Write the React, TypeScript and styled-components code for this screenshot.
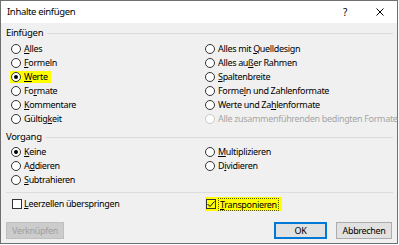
import React from "react";
import styled, { createGlobalStyle } from "styled-components";

const Global = createGlobalStyle`
  html, body { margin: 0; padding: 0; background: #ffffff; }
  body { font-family: "Noto Sans", "Open Sans", sans-serif; font-size: 9px; letter-spacing: -0.33px; color: #000; }
  * { box-sizing: border-box; }
`;

const Window = styled.div`
  width: 398px;
  height: 244px;
  border: 1px solid #6f6f6f;
  background: #f0f0f0;
  display: flex;
  flex-direction: column;
`;

const TitleBar = styled.div`
  height: 22px;
  background: #ffffff;
  display: flex;
  align-items: center;
  padding-left: 6px;
  flex: none;
`;

const Title = styled.div`
  flex: 1;
  font-size: 9.5px;
  letter-spacing: -0.35px;
  line-height: 14px;
`;

const TitleButton = styled.div<{ $w: number }>`
  width: ${(p) => p.$w}px;
  height: 22px;
  display: flex;
  align-items: center;
  justify-content: center;
  font-size: 10px;
  color: #000;
`;

const Body = styled.div`
  flex: 1;
  display: flex;
  flex-direction: column;
  padding: 3px 4px 4px 4px;
`;

const GroupHeader = styled.div<{ $mt?: number }>`
  display: flex;
  align-items: center;
  height: 14px;
  line-height: 14px;
  margin-top: ${(p) => p.$mt ?? 0}px;
  gap: 4px;
  padding-left: 1px;
  font-size: 9.5px;
`;

const HeaderLine = styled.div`
  flex: 1;
  height: 1px;
  background: #dcdcdc;
`;

const OptionGrid = styled.div<{ $mt: number; $rows: number }>`
  display: grid;
  grid-template-columns: 194px 1fr;
  grid-auto-flow: column;
  grid-template-rows: repeat(${(p) => p.$rows}, 14px);
  margin-top: ${(p) => p.$mt}px;
  padding-left: 6px;
`;

const Option = styled.label<{ $disabled?: boolean }>`
  display: flex;
  align-items: center;
  height: 14px;
  line-height: 12px;
  white-space: nowrap;
  color: ${(p) => (p.$disabled ? "#a6a6a6" : "#000")};
`;

const Highlight = styled.span<{ $h: number }>`
  display: inline-flex;
  align-items: center;
  height: ${(p) => p.$h}px;
  background: #ffff00;
  padding: 0 3px 0 1px;
  margin-left: -1px;
`;

const RadioCircle = styled.span<{ $checked?: boolean; $disabled?: boolean }>`
  width: 10px;
  height: 10px;
  border-radius: 50%;
  border: 1px solid ${(p) => (p.$disabled ? "#c8c8c8" : "#333333")};
  background: #ffffff;
  display: inline-flex;
  align-items: center;
  justify-content: center;
  margin-right: 3px;
  flex: none;
  &::after {
    content: "";
    display: ${(p) => (p.$checked ? "block" : "none")};
    width: 4px;
    height: 4px;
    border-radius: 50%;
    background: #000;
  }
`;

const Box = styled.span<{ $clear?: boolean }>`
  width: 10px;
  height: 10px;
  border: 1px solid #333333;
  background: ${(p) => (p.$clear ? "transparent" : "#ffffff")};
  display: inline-flex;
  align-items: center;
  justify-content: center;
  margin-right: 2px;
  flex: none;
`;

const FocusText = styled.span`
  border: 1px dotted #5a5a00;
  padding: 0 1px;
  line-height: 11px;
`;

const Separator = styled.div`
  height: 1px;
  background: #dcdcdc;
  margin-top: 5px;
  margin-left: 1px;
`;

const CheckRow = styled.div`
  display: grid;
  grid-template-columns: 194px 1fr;
  margin-top: 4px;
  padding-left: 7px;
  height: 14px;
`;

const ButtonRow = styled.div`
  display: flex;
  margin-top: 11px;
  padding-left: 1px;
  padding-right: 1px;
  align-items: center;
`;

const Spacer = styled.div`
  flex: 1;
`;

const Button = styled.button<{ $variant: "default" | "disabled" | "normal"; $w: number }>`
  width: ${(p) => p.$w}px;
  height: 17px;
  font-family: inherit;
  font-size: 9px;
  letter-spacing: -0.33px;
  line-height: 12px;
  padding: 0;
  margin-left: ${(p) => (p.$variant === "normal" ? "9px" : "0")};
  background: ${(p) => (p.$variant === "disabled" ? "#cccccc" : "#e1e1e1")};
  color: ${(p) => (p.$variant === "disabled" ? "#9f9f9f" : "#000")};
  border: ${(p) =>
    p.$variant === "default"
      ? "2px solid #0078d7"
      : p.$variant === "disabled"
      ? "1px solid #bfbfbf"
      : "1px solid #adadad"};
`;

const U = styled.u`
  text-decoration-thickness: 1px;
  text-underline-offset: 1px;
`;

type Opt = { pre?: string; u?: string; post?: string; checked?: boolean; disabled?: boolean; hl?: boolean };

const Radio: React.FC<{ o: Opt }> = ({ o }) => {
  const content = (
    <>
      <RadioCircle $checked={o.checked} $disabled={o.disabled} />
      <span>
        {o.pre}
        {o.u && <U>{o.u}</U>}
        {o.post}
      </span>
    </>
  );
  return (
    <Option $disabled={o.disabled}>
      {o.hl ? <Highlight $h={12}>{content}</Highlight> : content}
    </Option>
  );
};

const einfuegen: Opt[] = [
  { u: "A", post: "lles" },
  { u: "F", post: "ormeln" },
  { u: "W", post: "erte", checked: true, hl: true },
  { pre: "Fo", u: "r", post: "mate" },
  { u: "K", post: "ommentare" },
  { pre: "Gültig", u: "k", post: "eit" },
  { pre: "Alles mit ", u: "Q", post: "uelldesign" },
  { pre: "Alles au", u: "ß", post: "er Rahmen" },
  { u: "S", post: "paltenbreite" },
  { pre: "Forme", u: "l", post: "n und Zahlenformate" },
  { pre: "Werte und Za", u: "h", post: "lenformate" },
  { pre: "Alle zusammenführenden bedingten Formate", disabled: true },
];

const vorgang: Opt[] = [
  { u: "K", post: "eine", checked: true },
  { pre: "A", u: "d", post: "dieren" },
  { u: "S", post: "ubtrahieren" },
  { u: "M", post: "ultiplizieren" },
  { pre: "D", u: "i", post: "vidieren" },
];

export default function App() {
  return (
    <>
      <Global />
      <Window>
        <TitleBar>
          <Title>Inhalte einfügen</Title>
          <TitleButton $w={36}>?</TitleButton>
          <TitleButton $w={34}>
            <svg width="8" height="8" viewBox="0 0 8 8">
              <path d="M0.5 0.5 L7.5 7.5 M7.5 0.5 L0.5 7.5" stroke="#000" strokeWidth="1" />
            </svg>
          </TitleButton>
        </TitleBar>
        <Body>
          <GroupHeader>
            <span>Einfügen</span>
            <HeaderLine />
          </GroupHeader>
          <OptionGrid $mt={2} $rows={6}>
            {einfuegen.map((o, i) => (
              <Radio key={i} o={o} />
            ))}
          </OptionGrid>
          <GroupHeader $mt={4}>
            <span>Vorgang</span>
            <HeaderLine />
          </GroupHeader>
          <OptionGrid $mt={1} $rows={3}>
            {vorgang.map((o, i) => (
              <Radio key={i} o={o} />
            ))}
          </OptionGrid>
          <Separator />
          <CheckRow>
            <Option>
              <Box />
              <span>
                <U>L</U>eerzellen überspringen
              </span>
            </Option>
            <Option>
              <Highlight $h={14}>
                <Box $clear>
                  <svg width="8" height="8" viewBox="0 0 8 8">
                    <path d="M0.5 4 L3 6.5 L7.5 1.5" stroke="#000" strokeWidth="1" fill="none" />
                  </svg>
                </Box>
                <FocusText>
                  <U>T</U>ransponieren
                </FocusText>
              </Highlight>
            </Option>
          </CheckRow>
          <ButtonRow>
            <Button $variant="disabled" $w={58}>
              Verknüpfen
            </Button>
            <Spacer />
            <Button $variant="default" $w={53}>
              OK
            </Button>
            <Button $variant="normal" $w={56}>
              Abbrechen
            </Button>
          </ButtonRow>
        </Body>
      </Window>
    </>
  );
}
